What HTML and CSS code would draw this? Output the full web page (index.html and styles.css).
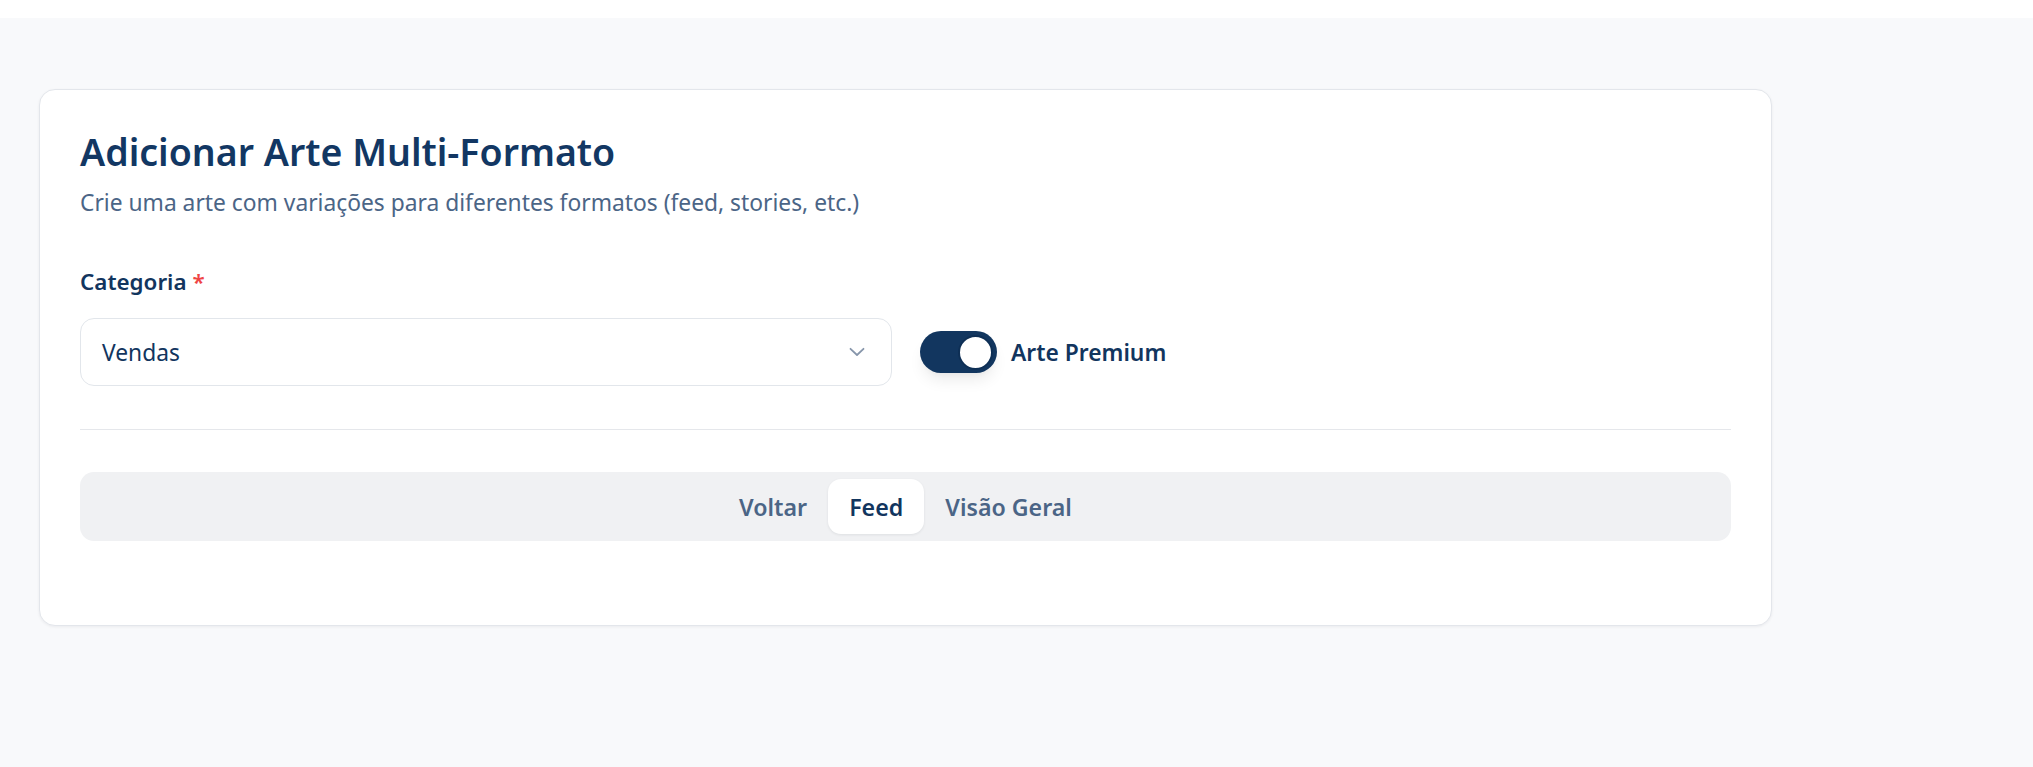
FILE: index.html
```html
<!DOCTYPE html>
<html lang="pt-BR">
<head>
<meta charset="utf-8">
<title>Adicionar Arte Multi-Formato</title>
<link rel="stylesheet" href="styles.css">
</head>
<body>
<div class="topbar"></div>
<main class="page">
  <section class="card">
    <h1 class="title">Adicionar Arte Multi-Formato</h1>
    <p class="subtitle">Crie uma arte com variações para diferentes formatos (feed, stories, etc.)</p>

    <div class="field">
      <label class="label">Categoria <span class="req">*</span></label>
      <div class="row">
        <div class="select">
          <span class="select-value">Vendas</span>
          <svg class="chevron" width="16" height="10" viewBox="0 0 16 10" fill="none">
            <path d="M1.5 1.8 L8 8 L14.5 1.8" stroke="#8796ab" stroke-width="1.8" stroke-linecap="round" stroke-linejoin="round"/>
          </svg>
        </div>
        <div class="premium">
          <div class="toggle"><span class="knob"></span></div>
          <span class="premium-label">Arte Premium</span>
        </div>
      </div>
    </div>

    <hr class="divider">

    <nav class="tabs">
      <button class="tab">Voltar</button>
      <button class="tab active">Feed</button>
      <button class="tab">Visão Geral</button>
    </nav>
  </section>
</main>
</body>
</html>
```

FILE: styles.css
```css
* { box-sizing: border-box; }

html, body {
  margin: 0;
  padding: 0;
}

body {
  background: #f8f9fb;
  font-family: "Noto Sans", "Open Sans", sans-serif;
  color: #12355e;
  min-height: 767px;
}

.topbar {
  height: 18px;
  background: #ffffff;
}

.page {
  padding: 71px 261px 0 39px;
}

.card {
  width: 1733px;
  background: #ffffff;
  border: 1px solid #e3e6eb;
  border-radius: 16px;
  box-shadow: 0 1px 3px rgba(15, 23, 42, 0.06);
  padding: 39px 40px 84px 40px;
}

.title {
  margin: 0;
  font-size: 37.5px;
  line-height: 45px;
  font-weight: 600;
  color: #123763;
}

.subtitle {
  margin: 15px 0 0 0;
  font-size: 22.8px;
  line-height: 28px;
  color: #4b6586;
}

.field {
  margin-top: 51px;
}

.label {
  display: block;
  font-size: 22.4px;
  line-height: 28px;
  font-weight: 600;
  color: #12355e;
}

.req { color: #ef4444; }

.row {
  display: flex;
  align-items: center;
  gap: 28px;
  margin-top: 22px;
}

.select {
  width: 812px;
  height: 68px;
  border: 1px solid #e2e6eb;
  border-radius: 14px;
  background: #ffffff;
  display: flex;
  align-items: center;
  justify-content: space-between;
  padding: 0 26px 0 21px;
}

.select-value {
  font-size: 22.8px;
  color: #12355e;
}

.premium {
  display: flex;
  align-items: center;
  gap: 14px;
}

.toggle {
  width: 77px;
  height: 42px;
  border-radius: 21px;
  background: #12365f;
  display: flex;
  align-items: center;
  justify-content: flex-end;
  padding: 0 4px;
  box-shadow: 0 10px 15px -3px rgba(0, 0, 0, 0.08), 0 4px 6px -4px rgba(0, 0, 0, 0.06);
}

.knob {
  width: 35px;
  height: 35px;
  border-radius: 50%;
  background: #ffffff;
  border: 2px solid #0e2f55;
}

.premium-label {
  font-size: 22.8px;
  font-weight: 600;
  color: #12355e;
}

.divider {
  border: 0;
  border-top: 1px solid #e5e7eb;
  margin: 43px 0 0 0;
}

.tabs {
  margin-top: 42px;
  height: 69px;
  background: #f0f1f3;
  border-radius: 14px;
  display: flex;
  justify-content: center;
  align-items: center;
}

.tab {
  border: 0;
  background: transparent;
  font-family: inherit;
  font-size: 23.2px;
  font-weight: 600;
  color: #4b6586;
  height: 55px;
  padding: 0 21px;
  border-radius: 13px;
}

.tab.active {
  background: #ffffff;
  color: #12355e;
  box-shadow: 0 1px 3px rgba(15, 23, 42, 0.08);
}
```
